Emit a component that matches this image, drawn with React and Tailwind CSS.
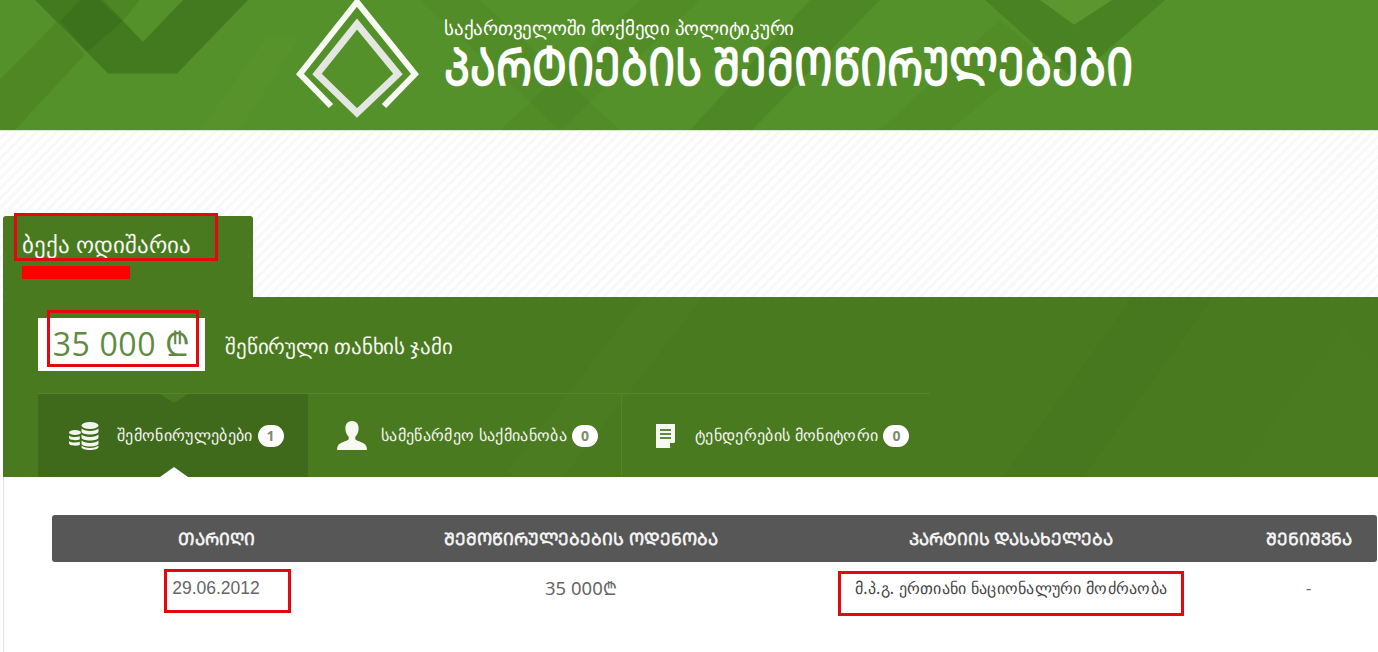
import React from 'react';

const RedBox = ({ className }) => (
  <div className={`absolute border-[3px] border-[#e30613] ${className}`}></div>
);

const Badge = ({ children }) => (
  <span className="ml-[5px] flex h-[22px] w-[26px] items-center justify-center rounded-full bg-white font-['Open_Sans',sans-serif] text-[14px] font-bold text-[#7d8a70]">
    {children}
  </span>
);

const HeaderBg = () => (
  <svg className="absolute inset-0 h-full w-full" viewBox="0 0 1378 131" preserveAspectRatio="none">
    <polygon points="0,80 57,22 85,55 15,131 0,131" fill="#3c7016" opacity="0.28" />
    <polygon points="35,0 108,74 177,74 248,0 183,0 143,42 103,0" fill="#2f5f14" opacity="0.45" />
    <polygon points="60,22 88,52 122,22 100,0 80,0" fill="#2f5f14" opacity="0.28" />
    <polygon points="103,0 122,22 140,0" fill="#2f5f14" opacity="0.2" />
    <polygon points="200,131 267,37 300,37 240,131" fill="#6ea63a" opacity="0.07" />
    <polygon points="420,0 560,131 620,131 480,0" fill="#2f5f14" opacity="0.08" />
    <polygon points="500,131 640,0 700,0 560,131" fill="#2f5f14" opacity="0.1" />
    <polygon points="690,131 810,0 880,0 752,131" fill="#2f5f14" opacity="0.18" />
    <polygon points="880,131 1000,20 1040,55 950,131" fill="#2f5f14" opacity="0.1" />
    <polygon points="985,0 1074,80 1165,0 1112,0 1074,25 1040,0" fill="#2f5f14" opacity="0.3" />
    <polygon points="1040,0 1074,25 1112,0" fill="#7fb24a" opacity="0.15" />
  </svg>
);

const PanelBg = () => (
  <svg className="absolute inset-0 h-full w-full" viewBox="0 0 1375 180" preserveAspectRatio="none">
    <polygon points="640,0 700,0 560,180 500,180" fill="#5b8c2f" opacity="0.12" />
    <polygon points="1000,180 1130,0 1210,0 1080,180" fill="#2f5f14" opacity="0.12" />
    <polygon points="1230,180 1340,30 1375,70 1375,180" fill="#5b8c2f" opacity="0.1" />
  </svg>
);

const Logo = () => (
  <svg className="absolute left-[290px] top-0" width="135" height="122" viewBox="290 0 135 122" fill="none">
    <polyline points="331,106 300,74 357,2 415,74 384,106" stroke="#f8faf4" strokeWidth="6" />
    <polygon points="357,24 398,74 357,113 317,74" stroke="#e4e7e1" strokeWidth="7" />
  </svg>
);

const CoinsIcon = () => (
  <svg width="32" height="28" viewBox="0 0 32 28" fill="#f2f5ee">
    <ellipse cx="22" cy="3.5" rx="8.5" ry="3.5" />
    <path d="M13.5 6.5c1.5 1.6 4.8 2.4 8.5 2.4s7-.8 8.5-2.4v3c0 1.8-3.8 3.1-8.5 3.1s-8.5-1.3-8.5-3.1z" />
    <path d="M13.5 12.5c1.5 1.6 4.8 2.4 8.5 2.4s7-.8 8.5-2.4v3c0 1.8-3.8 3.1-8.5 3.1s-8.5-1.3-8.5-3.1z" />
    <path d="M13.5 18.5c1.5 1.6 4.8 2.4 8.5 2.4s7-.8 8.5-2.4v3c0 1.8-3.8 3.1-8.5 3.1s-8.5-1.3-8.5-3.1z" />
    <path d="M13.5 23.5c1.5 1.6 4.8 2.4 8.5 2.4s7-.8 8.5-2.4V25c0 1.8-3.8 3-8.5 3s-8.5-1.2-8.5-3z" />
    <ellipse cx="7" cy="10.5" rx="6" ry="2.6" />
    <path d="M1 13.5c1.2 1 3.4 1.6 6 1.6 1.9 0 3.5-.3 4.8-.8v3.2c-1.3.5-2.9.7-4.8.7-3.3 0-6-1-6-2.4z" />
    <path d="M1 19c1.2 1 3.4 1.6 6 1.6 1.9 0 3.5-.3 4.8-.8V23c-1.3.5-2.9.7-4.8.7-3.3 0-6-1-6-2.4z" />
  </svg>
);

const UserIcon = () => (
  <svg width="30" height="29" viewBox="0 0 30 29" fill="#f6f8f2">
    <path d="M15 0c4.2 0 6.6 3 6.6 7.4 0 3.4-1.4 6.6-3.3 8.4v2.8c1.6 1.6 9.5 3 11 6.6.4 1 .7 2.4.7 3.8H0c0-1.4.3-2.8.7-3.8 1.5-3.6 9.4-5 11-6.6v-2.8C9.8 14 8.4 10.8 8.4 7.4 8.4 3 10.8 0 15 0z" />
  </svg>
);

const DocIcon = () => (
  <svg width="19" height="24" viewBox="0 0 19 24">
    <path d="M0 0h19v18l-5 6H0z" fill="#f6f8f2" />
    <path d="M4 5h11v2H4zM4 9h11v2H4zM4 13h11v2H4z" fill="#5f8a3f" />
    <path d="M14 19h5l-5 5z" fill="#4a7a20" />
  </svg>
);

const tabText = "pb-[2px] text-[16px] leading-none font-medium tracking-[0.33px] text-[#f4f6ef]";

export default function App() {
  return (
    <div className="relative h-[652px] w-[1378px] overflow-hidden bg-white font-['Noto_Sans',sans-serif]">
      {/* header */}
      <header className="relative h-[131px] overflow-hidden border-b border-[#dfe8d4] bg-[#55912a]">
        <HeaderBg />
        <Logo />
        <div className="relative ml-[444px] flex flex-col pt-[16px] text-white">
          <span className="text-[19px] leading-[24px] font-medium tracking-[-0.25px] whitespace-nowrap">საქართველოში მოქმედი პოლიტიკური</span>
          <span className="mt-[1px] origin-center scale-y-[1.2] text-[43px] leading-[50px] font-bold whitespace-nowrap">ᲞᲐᲠᲢᲘᲔᲑᲘᲡ ᲨᲔᲛᲝᲬᲘᲠᲣᲚᲔᲑᲔᲑᲘ</span>
        </div>
      </header>

      {/* striped band with name tab */}
      <div className="flex h-[166px] items-end bg-[repeating-linear-gradient(135deg,#ffffff_0px,#ffffff_4px,#f9f9fa_4px,#f9f9fa_7px)] pl-[3px]">
        <div className="h-[81px] w-[250px] rounded-t-[3px] bg-[#4a7a20] pl-[19px] pt-[13px]">
          <span className="text-[23.2px] leading-[30px] font-medium whitespace-nowrap text-[#f4f6ef]">ბექა ოდიშარია</span>
        </div>
      </div>

      {/* green panel */}
      <section className="relative ml-[3px] h-[180px] bg-[#4a7a20]">
        <PanelBg />
        <div className="relative flex h-[96px] items-start pl-[35px] pt-[21px]">
          <div className="flex h-[53px] w-[167px] items-center justify-center bg-white pb-[1px] font-['Open_Sans','Noto_Sans',sans-serif] text-[32px] tracking-[0.6px] whitespace-nowrap text-[#5f8a3f]">
            35 000 ₾
          </div>
          <span className="ml-[20px] self-center pb-[18px] text-[20.5px] font-medium tracking-[-0.15px] whitespace-nowrap text-[#f4f6ef]">შეწირული თანხის ჯამი</span>
        </div>
        <nav className="relative ml-[35px] flex h-[84px] w-[892px] border-t border-[#568529]">
          <div className="relative flex w-[270px] items-center bg-[#3f691b] pl-[30px]">
            <div className="absolute left-[122px] top-0 h-0 w-0 border-x-[14px] border-t-[9px] border-x-transparent border-t-[#4a7a20]"></div>
            <CoinsIcon />
            <span className={`ml-[17px] ${tabText}`}>შემონირულებები</span>
            <Badge>1</Badge>
            <div className="absolute bottom-0 left-[122px] h-0 w-0 border-x-[14px] border-b-[10px] border-x-transparent border-b-white"></div>
          </div>
          <div className="flex w-[314px] items-center border-r border-[#568529] pl-[29px]">
            <UserIcon />
            <span className={`ml-[14px] ${tabText}`}>სამეწარმეო საქმიანობა</span>
            <Badge>0</Badge>
          </div>
          <div className="flex flex-1 items-center pl-[34px]">
            <DocIcon />
            <span className={`ml-[20px] ${tabText}`}>ტენდერების მონიტორი</span>
            <Badge>0</Badge>
          </div>
        </nav>
      </section>

      {/* table */}
      <div className="ml-[3px] h-[175px] border-l border-[#e3e3e3] pl-[48px] pt-[38px]">
        <div className="grid h-[47px] w-[1325px] grid-cols-[328px_402px_458px_137px] items-center rounded-[3px] bg-[#575757] text-center text-[17px] font-bold whitespace-nowrap text-[#f2f2f2]">
          <span>ᲗᲐᲠᲘᲦᲘ</span>
          <span>ᲨᲔᲛᲝᲬᲘᲠᲣᲚᲔᲑᲔᲑᲘᲡ ᲝᲓᲔᲜᲝᲑᲐ</span>
          <span>ᲞᲐᲠᲢᲘᲘᲡ ᲓᲐᲡᲐᲮᲔᲚᲔᲑᲐ</span>
          <span>ᲨᲔᲜᲘᲨᲕᲜᲐ</span>
        </div>
        <div className="grid w-[1325px] grid-cols-[328px_402px_458px_137px] pt-[15px] text-center text-[#666666]">
          <span className="font-['Liberation_Sans',sans-serif] text-[17.5px] leading-[22px]">29.06.2012</span>
          <span className="text-[18.5px] leading-[22px]">35 000₾</span>
          <span className="text-[16px] leading-[22px] tracking-[0.25px] text-[#444444]">მ.პ.გ. ერთიანი ნაციონალური მოძრაობა</span>
          <span className="text-[16px] leading-[22px]">-</span>
        </div>
      </div>

      {/* red annotations */}
      <RedBox className="left-[14px] top-[213px] h-[48px] w-[204px]" />
      <div className="absolute left-[22px] top-[266px] h-[13px] w-[108px] bg-[#fe0000]"></div>
      <RedBox className="left-[47px] top-[310px] h-[57px] w-[152px]" />
      <RedBox className="left-[164px] top-[569px] h-[44px] w-[127px]" />
      <RedBox className="left-[838px] top-[571px] h-[45px] w-[346px]" />
    </div>
  );
}
